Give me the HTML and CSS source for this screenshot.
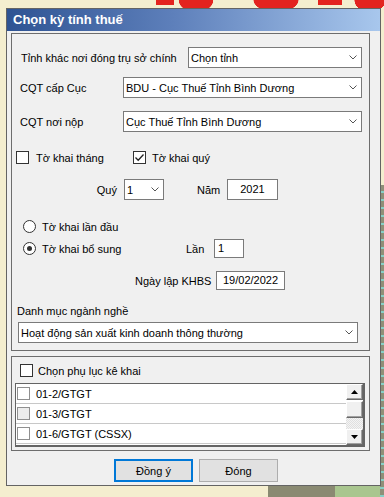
FILE: index.html
```html
<!DOCTYPE html>
<html lang="vi">
<head>
    <meta charset="UTF-8">
    <meta name="viewport" content="width=device-width, initial-scale=1.0">
    <title>Chọn kỳ tính thuế</title>
    <link rel="stylesheet" href="styles.css">
</head>
<body>
    <div class="window">
        <div class="titlebar">Chọn kỳ tính thuế</div>
        <div class="client">
            <div class="group group-main">
                <div class="row r1">
                    <span class="lbl lbl-tinh">Tỉnh khác nơi đóng trụ sở chính</span>
                    <div class="combo combo-tinh"><span>Chọn tỉnh</span><svg class="chev" width="8" height="5" viewBox="0 0 8 5"><polyline points="0.5,0.5 4,4 7.5,0.5" fill="none" stroke="#555" stroke-width="1"/></svg></div>
                </div>
                <div class="row r2">
                    <span class="lbl lbl-cqt">CQT cấp Cục</span>
                    <div class="combo combo-cqt"><span>BDU - Cục Thuế Tỉnh Bình Dương</span><svg class="chev" width="8" height="5" viewBox="0 0 8 5"><polyline points="0.5,0.5 4,4 7.5,0.5" fill="none" stroke="#555" stroke-width="1"/></svg></div>
                </div>
                <div class="row r3">
                    <span class="lbl lbl-cqt">CQT nơi nộp</span>
                    <div class="combo combo-cqt"><span>Cục Thuế Tỉnh Bình Dương</span><svg class="chev" width="8" height="5" viewBox="0 0 8 5"><polyline points="0.5,0.5 4,4 7.5,0.5" fill="none" stroke="#555" stroke-width="1"/></svg></div>
                </div>
                <div class="row r4">
                    <div class="check-item first">
                        <span class="checkbox"></span><span class="check-text">Tờ khai tháng</span>
                    </div>
                    <div class="check-item">
                        <span class="checkbox checked"><svg width="11" height="11" viewBox="0 0 11 11"><polyline points="1.5,5.5 4.2,8.3 9.5,2.5" fill="none" stroke="#222" stroke-width="1.3"/></svg></span><span class="check-text second">Tờ khai quý</span>
                    </div>
                </div>
                <div class="row r5">
                    <span class="lbl lbl-quy">Quý</span>
                    <div class="combo combo-quy"><span>1</span><svg class="chev" width="8" height="5" viewBox="0 0 8 5"><polyline points="0.5,0.5 4,4 7.5,0.5" fill="none" stroke="#555" stroke-width="1"/></svg></div>
                    <span class="lbl lbl-nam">Năm</span>
                    <div class="textbox tb-nam">2021</div>
                </div>
                <div class="row r6">
                    <span class="radio"></span><span class="radio-text">Tờ khai lần đầu</span>
                </div>
                <div class="row r7">
                    <div class="radio-item">
                        <span class="radio checked"></span><span class="radio-text">Tờ khai bổ sung</span>
                    </div>
                    <span class="lbl lbl-lan">Lần</span>
                    <div class="textbox tb-lan">1</div>
                </div>
                <div class="row r8">
                    <span class="lbl lbl-ngay">Ngày lập KHBS</span>
                    <div class="textbox tb-ngay">19/02/2022</div>
                </div>
                <div class="row r9">
                    <span class="lbl">Danh mục ngành nghề</span>
                </div>
                <div class="row r10">
                    <div class="combo combo-nganh"><span>Hoạt động sản xuất kinh doanh thông thường</span><svg class="chev" width="8" height="5" viewBox="0 0 8 5"><polyline points="0.5,0.5 4,4 7.5,0.5" fill="none" stroke="#555" stroke-width="1"/></svg></div>
                </div>
            </div>

            <div class="group group-phuluc">
                <div class="row pl-head">
                    <span class="checkbox"></span><span class="pl-text">Chọn phụ lục kê khai</span>
                </div>
                <div class="listbox">
                    <div class="list-rows">
                        <div class="list-row"><span class="list-check"></span>01-2/GTGT</div>
                        <div class="list-row"><span class="list-check grey"></span>01-3/GTGT</div>
                        <div class="list-row"><span class="list-check"></span>01-6/GTGT (CSSX)</div>
                    </div>
                    <div class="scrollbar">
                        <div class="sb-btn"><svg width="7" height="4" viewBox="0 0 7 4"><polygon points="3.5,0 7,4 0,4" fill="#000"/></svg></div>
                        <div class="sb-thumb"></div>
                        <div class="sb-track"></div>
                        <div class="sb-btn"><svg width="7" height="4" viewBox="0 0 7 4"><polygon points="0,0 7,0 3.5,4" fill="#000"/></svg></div>
                    </div>
                </div>
            </div>

            <div class="buttons">
                <button class="btn btn-default">Đồn<u>g</u> ý</button>
                <button class="btn">Đón<u>g</u></button>
            </div>
        </div>
    </div>
</body>
</html>
```

FILE: styles.css
```css
:root {
    --face: #f0f0f0;
    --edge: #6d6d6d;
    --field-border: #7a7a7a;
    --accent: #0078d7;
    --banner-red: #e3231f;
}
body {
    margin: 0;
    width: 384px;
    height: 497px;
    overflow: hidden;
    font-family: "Liberation Sans", Arial, sans-serif;
    font-size: 11px;
    color: #000;
    background-color: #f4eecf;
    /* desktop wallpaper bits peeking out around the dialog */
    background-image:
        radial-gradient(ellipse at 50% 0, var(--banner-red) 60%, transparent 62%),
        radial-gradient(ellipse at 50% 0, var(--banner-red) 60%, transparent 62%),
        radial-gradient(ellipse at 50% 0, var(--banner-red) 60%, transparent 62%),
        linear-gradient(var(--banner-red), var(--banner-red)),
        linear-gradient(var(--banner-red), var(--banner-red)),
        repeating-linear-gradient(to bottom, #8f8f78 0 6px, #86cfc6 6px 8px),
        linear-gradient(to right, #f4eecf 0 268px, #8a8a72 268px 335px, #a9c68f 335px);
    background-repeat: no-repeat;
    background-position:
        176px 0, 250px 0, 352px 0,
        156px 0, 318px 0,
        right 0 top 185px, left 0 bottom 0;
    background-size:
        40px 14px, 52px 14px, 36px 14px,
        18px 5px, 24px 5px,
        4px 320px, 100% 11px;
}
.window {
    margin: 8px 0 0 6px;
    width: 375px;
    box-sizing: border-box;
    border: 1px solid #646464;
    background: var(--face);
}
.titlebar {
    height: 22px;
    line-height: 22px;
    padding-left: 6px;
    font-size: 13px;
    font-weight: bold;
    color: #fff;
    background: linear-gradient(to right, #2e5393, #5e80bb 45%, #a8c7ed);
}
.client {
    padding: 2px 0 3px 4px;
}
.group {
    width: 359px;
    box-sizing: border-box;
    border: 1px solid var(--edge);
}
.group-main {
    padding: 13px 0 7px 0;
}
.group-phuluc {
    margin-top: 5px;
    padding: 7px 0 3px 0;
}
.row {
    display: flex;
    align-items: center;
}
.lbl {
    white-space: nowrap;
}
.r1 { height: 21px; padding-left: 9px; }
.r2 { height: 21px; padding-left: 8px; margin-top: 9px; }
.r3 { height: 21px; padding-left: 8px; margin-top: 13px; }
.r4 { height: 13px; padding-left: 4px; margin-top: 19px; }
.r5 { height: 21px; margin-top: 15px; }
.r6 { height: 13px; padding-left: 11px; margin-top: 20px; }
.r7 { height: 19px; padding-left: 11px; margin-top: 6px; }
.r8 { height: 19px; padding-left: 123px; margin-top: 13px; }
.r9 { height: 14px; padding-left: 5px; margin-top: 14px; }
.r10 { height: 21px; padding-left: 6px; margin-top: 4px; }

.lbl-tinh { width: 167px; }
.lbl-cqt { width: 103px; }
.lbl-quy { width: 105px; padding-right: 7px; text-align: right; }
.lbl-nam { margin-left: 33px; width: 30px; }
.lbl-lan { width: 28px; }
.lbl-ngay { width: 81px; }

.combo {
    display: flex;
    align-items: center;
    justify-content: space-between;
    height: 21px;
    box-sizing: border-box;
    border: 1px solid var(--field-border);
    background: #fff;
    padding: 0 4px 0 2px;
    white-space: nowrap;
}
.combo-tinh { width: 174px; }
.combo-cqt { width: 239px; }
.combo-quy { width: 40px; }
.combo-nganh { width: 340px; }
.chev {
    flex: none;
}
.textbox {
    height: 19px;
    line-height: 17px;
    box-sizing: border-box;
    border: 1px solid var(--field-border);
    background: #fff;
    text-align: center;
}
.r5 .textbox { height: 21px; line-height: 19px; }
.tb-nam { width: 51px; }
.tb-lan { width: 30px; text-align: left; padding-left: 3px; }
.tb-ngay { width: 69px; }

.check-item {
    display: flex;
    align-items: center;
}
.check-item.first { width: 117px; }
.checkbox {
    width: 13px;
    height: 13px;
    box-sizing: border-box;
    border: 1px solid #333;
    background: #fff;
    display: flex;
    align-items: center;
    justify-content: center;
    flex: none;
}
.check-text { margin-left: 7px; }
.check-text.second { margin-left: 6px; }

.radio-item {
    display: flex;
    align-items: center;
    width: 163px;
}
.radio {
    width: 13px;
    height: 13px;
    box-sizing: border-box;
    border: 1px solid #333;
    border-radius: 50%;
    background: #fff;
    display: flex;
    align-items: center;
    justify-content: center;
    flex: none;
}
.radio.checked::after {
    content: '';
    width: 5px;
    height: 5px;
    border-radius: 50%;
    background: #333;
}
.radio-text { margin-left: 6px; }

.pl-head { height: 13px; padding-left: 8px; }
.pl-text { margin-left: 5px; }

.listbox {
    position: relative;
    margin: 6px 0 0 3px;
    width: 350px;
    height: 64px;
    box-sizing: border-box;
    border: 1px solid #646464;
    border-right-width: 2px;
    border-bottom-width: 2px;
    background: #fff;
}
.list-row {
    display: flex;
    align-items: center;
    height: 19px;
    border-bottom: 1px solid #c8c8c8;
    padding-left: 1px;
}
.list-check {
    width: 13px;
    height: 13px;
    box-sizing: border-box;
    border: 1px solid #8f8f8f;
    background: #fff;
    margin-right: 6px;
}
.list-check.grey { background: #ececec; }

.scrollbar {
    position: absolute;
    top: 0;
    right: 0;
    bottom: 0;
    width: 17px;
    display: flex;
    flex-direction: column;
    background: #fff;
}
.sb-btn, .sb-thumb {
    box-sizing: border-box;
    background: var(--face);
    border-top: 1px solid #fff;
    border-left: 1px solid #fff;
    border-right: 1px solid #696969;
    border-bottom: 1px solid #696969;
    box-shadow: inset -1px -1px 0 #a0a0a0;
}
.sb-btn {
    height: 16px;
    display: flex;
    align-items: center;
    justify-content: center;
}
.sb-thumb { height: 17px; margin-top: 1px; }
.sb-track {
    flex: 1;
    background: repeating-conic-gradient(#f4f4f4 0 25%, #e0e0e0 0 50%) 0 0 / 2px 2px;
}

.buttons {
    display: flex;
    gap: 6px;
    margin: 8px 0 0 103px;
}
.btn {
    width: 79px;
    height: 23px;
    box-sizing: border-box;
    border: 1px solid #adadad;
    background: #e1e1e1;
    font-family: "Liberation Sans", Arial, sans-serif;
    font-size: 11px;
    color: #000;
    padding: 0;
}
.btn-default {
    border: 2px solid var(--accent);
}
```
